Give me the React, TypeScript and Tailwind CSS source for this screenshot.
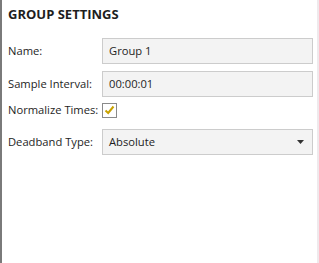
import React from 'react';

const font = { fontFamily: '"Open Sans", "Noto Sans", sans-serif' };

function Row({ label, children, className }: { label: string; children: React.ReactNode; className?: string }) {
  return (
    <div className={'flex items-center ' + (className ?? '')}>
      <span className="w-[94px] shrink-0 whitespace-nowrap text-[11.2px] text-[#1e1e1e]">{label}</span>
      <div className="flex-1">{children}</div>
    </div>
  );
}

function TextBox({ value }: { value: string }) {
  return (
    <div className="h-[26px] border border-[#cccccc] bg-[#f3f3f3] px-[6px] flex items-center text-[11.2px] text-[#1e1e1e]">
      {value}
    </div>
  );
}

export default function App() {
  return (
    <div style={font} className="w-[319px] h-[263px] bg-white flex">
      <div className="w-[2px] bg-[#7a7a7a]" />
      <div className="flex-1 pl-[6px] pr-[4px]">
        <h1 className="pt-[6px] text-[13px] font-bold text-[#1e1e1e] leading-[16px]">GROUP SETTINGS</h1>
        <div className="mt-[16px] flex flex-col">
          <Row label="Name:">
            <TextBox value="Group 1" />
          </Row>
          <Row label="Sample Interval:" className="mt-[7px]">
            <TextBox value="00:00:01" />
          </Row>
          <Row label="Normalize Times:" className="mt-[6px] h-[14px]">
            <div className="w-[15px] h-[15px] border border-[#8a8a8a] bg-white flex items-center justify-center">
              <svg width="11" height="10" viewBox="0 0 11 10">
                <path d="M1.5 5.5 L4.2 8 L9.5 1.5" fill="none" stroke="#c9a200" strokeWidth="2" />
              </svg>
            </div>
          </Row>
          <Row label="Deadband Type:" className="mt-[12px]">
            <div className="h-[26px] border border-[#cccccc] bg-[#f3f3f3] pl-[6px] pr-[8px] flex items-center justify-between text-[11.2px] text-[#1e1e1e]">
              <span>Absolute</span>
              <svg width="7" height="4" viewBox="0 0 7 4">
                <path d="M0 0 H7 L3.5 4 Z" fill="#333" />
              </svg>
            </div>
          </Row>
        </div>
      </div>
      <div className="w-[2px] bg-[#efe9ec]" />
    </div>
  );
}
